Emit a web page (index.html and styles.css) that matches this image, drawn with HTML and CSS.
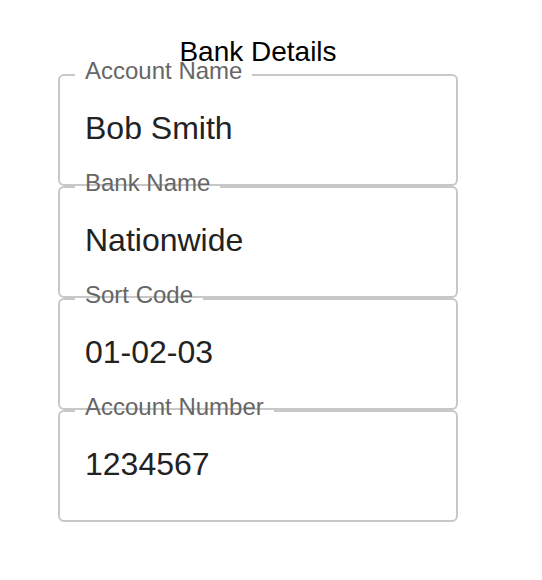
FILE: index.html
```html
<!DOCTYPE html>
<html>
<head>
<meta charset="utf-8">
<link rel="stylesheet" href="styles.css">
</head>
<body>
<div class="card">
  <div class="title">Bank Details</div>
  <fieldset class="field">
    <legend class="label">Account Name</legend>
    <div class="value">Bob Smith</div>
  </fieldset>
  <fieldset class="field">
    <legend class="label">Bank Name</legend>
    <div class="value">Nationwide</div>
  </fieldset>
  <fieldset class="field">
    <legend class="label">Sort Code</legend>
    <div class="value">01-02-03</div>
  </fieldset>
  <fieldset class="field">
    <legend class="label">Account Number</legend>
    <div class="value">1234567</div>
  </fieldset>
</div>
</body>
</html>
```
FILE: styles.css
```css
html, body {
  margin: 0;
  padding: 0;
  background: #ffffff;
}
body {
  font-family: "Liberation Sans", Arial, sans-serif;
}
.card {
  width: 400px;
  margin-left: 58px;
  padding-top: 36px;
}
.title {
  font-size: 28px;
  line-height: 32px;
  color: #000000;
  text-align: center;
  margin-bottom: -11px;
}
.field {
  box-sizing: border-box;
  width: 400px;
  margin: -17px 0 0 0;
  padding: 0 24px 0 25px;
  border: 2px solid #c8c8c8;
  border-radius: 6px;
  min-width: 0;
}
.title + .field {
  margin-top: 0;
}
.label {
  font-size: 24px;
  line-height: 28px;
  color: #666666;
  padding: 0 10px 8px 10px;
  margin-left: -10px;
}
.value {
  font-size: 32px;
  line-height: 36px;
  color: #222222;
  padding: 17px 0 38px 0;
}
```
